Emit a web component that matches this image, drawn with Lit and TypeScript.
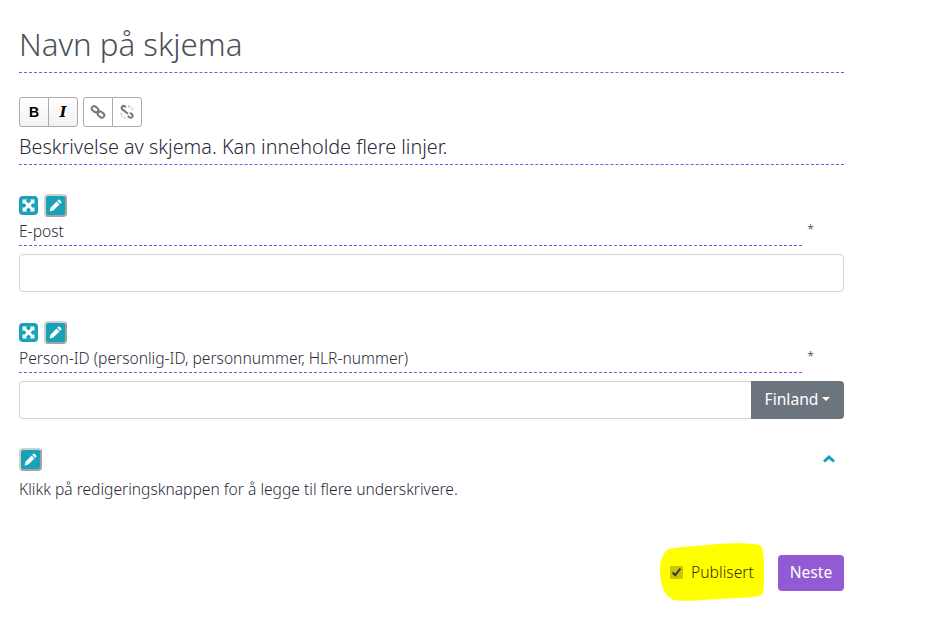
import { LitElement, html, css, svg } from "lit";
import { customElement } from "lit/decorators.js";

const pencil = svg`<svg width="13" height="13" viewBox="0 0 12 12"><path d="M8.600.700a.900.900 0 0 1 1.200 0l1.500 1.500a.900.900 0 0 1 0 1.200L10.300 4.400 7.600 1.700zM7 2.300l2.700 2.700-5.700 5.700-3.400.800.800-3.500z" fill="#fff"/></svg>`;
const expand = svg`<svg width="13" height="13" viewBox="0 0 12 12"><path d="M.500.500h4.400L3.600 1.800 6 4.100l2.400-2.300L7.100.500h4.400v4.400l-1.300-1.300L7.900 6l2.300 2.400 1.300-1.300v4.400H7.100l1.300-1.300L6 7.900l-2.400 2.300 1.300 1.300H.500V7.100l1.300 1.300L4.100 6 1.800 3.600.500 4.900z" fill="#fff"/></svg>`;
const link = svg`<svg width="16" height="16" viewBox="0 0 16 16" fill="none" stroke="#777" stroke-width="2"><rect x="1.500" y="2.800" width="7" height="4.800" rx="2.400" transform="rotate(38 5 5.200)"/><rect x="7.500" y="8.200" width="7" height="4.800" rx="2.400" transform="rotate(38 11 10.600)"/></svg>`;
const unlink = svg`<svg width="16" height="16" viewBox="0 0 16 16" fill="none" stroke="#777" stroke-width="2"><path d="M7 3.200 5.800 2.300a2 2 0 0 0-2.600.3 2 2 0 0 0 .2 2.800l5.600 4.400M11 8.800l1.900 1.500a2 2 0 0 1 .2 2.800 2 2 0 0 1-2.700.2L8.700 12"/><path d="M9.500 1v2.500M12.200 1.800l-1.400 2M14.800 5h-2.500M.8 10h2.500M2 13.200l1.800-1.500M5.800 14.800v-2.400" stroke="#bbb" stroke-width="1"/></svg>`;
const blob = svg`<svg class="blob" width="106" height="60" viewBox="0 0 106 60"><path d="M10 6C24 3 40 3 58 1c16-1 34-1 43 1 4 4 4 14 4 28 0 10 0 18-2 22-8 3-28 3-46 4-14 1-30 3-42 1C9 55 3 48 2 38 0 28 0 12 10 6z" fill="#ffff00"/></svg>`;

@customElement("app-root")
export class AppRoot extends LitElement {
  static styles = css`
    :host {
      display: block;
      height: 637px;
      background: #fff;
      color: #2b2a3a;
      font-family: "Noto Sans", "Lato", sans-serif;
      font-weight: 300;
      box-sizing: border-box;
      overflow: hidden;
    }
    .form {
      width: 825px;
      margin-left: 19px;
      padding-top: 22px;
    }
    .title {
      font-size: 31.2px;
      font-weight: 300;
      line-height: 44px;
      color: #495057;
      margin: 0;
      padding-bottom: 6px;
      border-bottom: 1px dashed #8e50d8;
    }
    .toolbar {
      display: flex;
      gap: 5px;
      margin-top: 24px;
    }
    .group { display: flex; }
    .tool {
      width: 30px;
      height: 30px;
      box-sizing: border-box;
      display: flex;
      align-items: center;
      justify-content: center;
      border: 1px solid #aaa;
      margin-left: -1px;
      background: #fff;
      font-family: "Liberation Sans", sans-serif;
      font-size: 14px;
      font-weight: 700;
      color: #000;
    }
    .group .tool:first-child { margin-left: 0; border-radius: 3px 0 0 3px; }
    .group .tool:last-child { border-radius: 0 3px 3px 0; }
    .shaded { background: linear-gradient(#fff, #f2f2f2); }
    .italic { font-style: italic; font-family: "DejaVu Serif", serif; font-size: 14px; font-weight: 700; }
    .description {
      font-size: 19.8px;
      line-height: 30px;
      margin-top: 5px;
      padding-bottom: 2px;
      border-bottom: 1px dashed #8e50d8;
    }
    .field { margin-top: 28px; }
    .actions { display: flex; gap: 6px; align-items: center; height: 24px; }
    .icon-btn {
      width: 19px;
      height: 19px;
      background: #17a2b8;
      border-radius: 4px;
      display: flex;
      align-items: center;
      justify-content: center;
    }
    .icon-btn.edit {
      width: 23px;
      height: 23px;
      box-sizing: border-box;
      border: 2px solid #a3a3a3;
      border-top-color: #d0d0d0;
      border-left-color: #d0d0d0;
    }
    .label-row { display: flex; height: 29px; }
    .label {
      width: 783px;
      box-sizing: border-box;
      font-size: 15.6px;
      line-height: 28px;
      border-bottom: 1px dashed #8e50d8;
    }
    .req { margin-left: 5px; font-size: 13px; line-height: 24px; }
    .input-wrap { display: flex; margin-top: 8px; height: 38px; }
    .input {
      flex: 1;
      box-sizing: border-box;
      border: 1px solid #ced4da;
      border-radius: 4px;
      background: #fff;
    }
    .input.joined { border-right: none; border-radius: 4px 0 0 4px; }
    .country {
      width: 93px;
      background: #6c757d;
      color: #fff;
      font-size: 15.6px;
      font-weight: 400;
      border-radius: 0 4px 4px 0;
      display: flex;
      align-items: center;
      justify-content: center;
      gap: 4px;
      padding-bottom: 2px;
      box-sizing: border-box;
    }
    .caret {
      width: 0;
      height: 0;
      border: 4px solid transparent;
      border-top-color: #fff;
      border-bottom: none;
    }
    .signers { margin-top: 28px; }
    .signers-head { display: flex; justify-content: space-between; align-items: center; height: 24px; }
    .chevron { margin-right: 8px; }
    .signers-text { font-size: 15.6px; line-height: 24px; margin-top: 6px; }
    .footer {
      display: flex;
      justify-content: flex-end;
      align-items: center;
      gap: 13px;
      margin-top: 44px;
    }
    .publish {
      position: relative;
      display: flex;
      align-items: center;
      gap: 8px;
      width: 106px;
      height: 56px;
      box-sizing: border-box;
      padding: 0 0 2px 11px;
      font-size: 15.7px;
      color: #3a3000;
    }
    .publish > * { position: relative; }
    .publish .blob { position: absolute; left: 0; top: -2px; }
    .publish input { margin: 0; width: 13px; height: 13px; accent-color: #c8c800; }
    .next {
      width: 66px;
      height: 36px;
      background: #925bd4;
      color: #fff;
      font-weight: 400;
      border-radius: 4px;
      display: flex;
      align-items: center;
      justify-content: center;
      font-size: 15.6px;
      padding-bottom: 2px;
      box-sizing: border-box;
    }
  `;

  renderField(label: string, joined: boolean) {
    return html`
      <div class="field">
        <div class="actions">
          <div class="icon-btn">${expand}</div>
          <div class="icon-btn edit">${pencil}</div>
        </div>
        <div class="label-row">
          <div class="label">${label}</div>
          <div class="req">*</div>
        </div>
        <div class="input-wrap">
          <div class="input ${joined ? "joined" : ""}"></div>
          ${joined ? html`<div class="country">Finland <span class="caret"></span></div>` : ""}
        </div>
      </div>
    `;
  }

  render() {
    return html`
      <div class="form">
        <h1 class="title">Navn på skjema</h1>
        <div class="toolbar">
          <div class="group">
            <div class="tool shaded">B</div>
            <div class="tool shaded italic">I</div>
          </div>
          <div class="group">
            <div class="tool">${link}</div>
            <div class="tool">${unlink}</div>
          </div>
        </div>
        <div class="description">Beskrivelse av skjema. Kan inneholde flere linjer.</div>
        ${this.renderField("E-post", false)}
        ${this.renderField("Person-ID (personlig-ID, personnummer, HLR-nummer)", true)}
        <div class="signers">
          <div class="signers-head">
            <div class="icon-btn edit">${pencil}</div>
            <svg class="chevron" width="14" height="10" viewBox="0 0 14 10"><path d="M7 1l6 5.500-2 2L7 5 3 8.500l-2-2z" fill="#17a2b8"/></svg>
          </div>
          <div class="signers-text">Klikk på redigeringsknappen for å legge til flere underskrivere.</div>
        </div>
        <div class="footer">
          <label class="publish">${blob}<input type="checkbox" checked /><span>Publisert</span></label>
          <div class="next">Neste</div>
        </div>
      </div>
    `;
  }
}
